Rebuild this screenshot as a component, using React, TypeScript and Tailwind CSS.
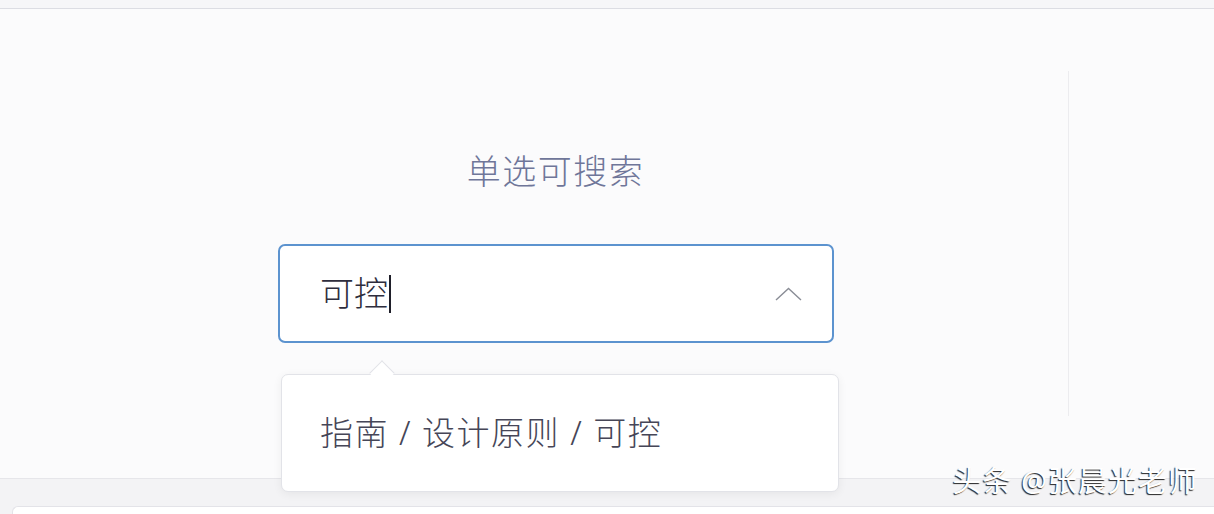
import React from "react";

const FONT = { fontFamily: '"Noto Sans", "Noto Sans CJK SC", sans-serif' };

function ChevronUp() {
  return (
    <svg width="27" height="14" viewBox="0 0 27 14" fill="none">
      <path d="M1 13 L13.5 1.5 L26 13" stroke="#8a8d96" strokeWidth="1.4" />
    </svg>
  );
}

export default function App() {
  return (
    <div className="w-[1214px] h-[514px] overflow-hidden flex flex-col bg-[#fafafb] font-light" style={FONT}>
      {/* top strip */}
      <div className="h-[9px] shrink-0 bg-[#f6f6f8] border-b border-[#dcdde3]" />

      {/* demo area */}
      <div className="relative flex-1 flex bg-[#fbfbfc]">
        <div className="flex-1 flex flex-col pl-[278px] pt-[134px]">
          <div className="w-[555px] flex justify-center text-[34px] leading-[56px] text-[#6f7699] tracking-[1.5px]">
            单选可搜索
          </div>

          <div className="relative mt-[45px] w-[556px]">
            <div className="h-[99px] flex items-center justify-between rounded-[7px] border-2 border-[#5c93cf] bg-white pl-[40px] pr-[30px]">
              <div className="flex items-center text-[34px] text-[#2e2d3d]">
                <span>可控</span>
                <span className="ml-[1px] w-[2px] h-[38px] bg-[#1f1f2a]" />
              </div>
              <ChevronUp />
            </div>

            {/* dropdown menu */}
            <div className="absolute left-[3px] top-[130px] w-[558px] z-10">
              <div className="absolute -top-[10px] left-[92px] w-[18px] h-[18px] rotate-45 bg-white border-l border-t border-[#e2e3e8]" />
              <div className="h-[118px] flex items-center pl-[38px] rounded-[7px] bg-white border border-[#e2e3e8] shadow-[0_2px_10px_rgba(0,0,0,0.06)]">
                <span className="relative text-[33px] text-[#464657] tracking-[1.5px]">指南 / 设计原则 / 可控</span>
              </div>
            </div>
          </div>
        </div>

        <div className="w-[1px] my-[62px] mr-[145px] bg-[#ececef]" />
      </div>

      {/* bottom area */}
      <div className="relative h-[36px] shrink-0 bg-[#f3f3f5] border-t border-[#e6e6ea] flex flex-col justify-end pl-[12px]">
        <div className="h-[8px] bg-white border-t border-l border-[#e3e3e8] rounded-tl-[6px]" />
        <div className="absolute right-[16px] -top-[17px] text-[29px] leading-[38px] font-normal tracking-[1px] text-white [text-shadow:-1px_1px_1px_rgba(0,0,0,0.85)]">
          头条 @张晨光老师
        </div>
      </div>
    </div>
  );
}
